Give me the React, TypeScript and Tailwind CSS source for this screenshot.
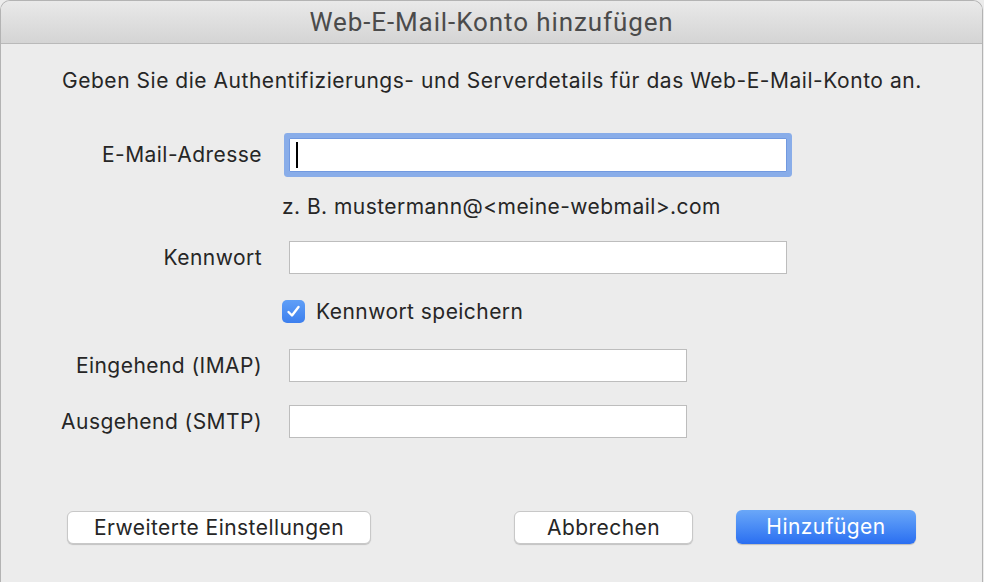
import React from 'react';

const font = { fontFamily: 'Inter, "Noto Sans", sans-serif' };

const Field = ({ width, focused }: { width: string; focused?: boolean }) => (
	<div
		className={
			focused
				? `${width} h-[34px] bg-white border border-[#7199e0] rounded-[1px] shadow-[0_0_0_5px_#89ade9] flex items-center pl-[6px]`
				: `${width} h-[33px] bg-white border border-[#bdbdbd]`
		}
	>
		{focused && <div className="w-[2px] h-[26px] bg-black" />}
	</div>
);

const Row = ({
	label,
	children,
	className,
}: {
	label: string;
	children: React.ReactNode;
	className: string;
}) => (
	<div className={`flex items-center ${className}`}>
		<div className="w-[262px] text-right text-[21px] tracking-[0.45px] text-[#262626] pr-[1px]">
			{label}
		</div>
		<div className="ml-[26px]">{children}</div>
	</div>
);

export default function App() {
	return (
		<div
			className="w-[984px] h-[582px] bg-[#ececec] overflow-hidden"
			style={font}
		>
			<div className="w-[983px] h-[600px] bg-[#ececec] border-x border-t border-[#b3b3b3] rounded-t-[10px] flex flex-col overflow-hidden">
				<div className="h-[43px] shrink-0 bg-gradient-to-b from-[#e9e9e9] to-[#d4d4d4] border-b border-[#b9b9b9] flex items-center justify-center">
					<span
						className="text-[26px] tracking-[0.9px] text-[#4b4b4b]"
						style={{ fontFamily: 'Roboto, sans-serif' }}
					>
						Web-E-Mail-Konto hinzufügen
					</span>
				</div>

				<p className="mt-[25px] h-[24px] leading-[24px] pl-[61px] text-[21px] tracking-[0.53px] text-[#262626] whitespace-nowrap">
					Geben Sie die Authentifizierungs- und Serverdetails für das
					Web-E-Mail-Konto an.
				</p>

				<Row label="E-Mail-Adresse" className="mt-[45px] h-[34px]">
					<Field width="w-[498px]" focused />
				</Row>

				<div className="mt-[23px] h-[24px] leading-[24px] pl-[281px] text-[21px] tracking-[0.45px] text-[#262626]">
					z. B. mustermann@&lt;meine-webmail&gt;.com
				</div>

				<Row label="Kennwort" className="mt-[22px] h-[33px]">
					<Field width="w-[498px]" />
				</Row>

				<div className="mt-[26px] h-[23px] flex items-center pl-[281px]">
					<div className="w-[23px] h-[23px] rounded-[5px] bg-gradient-to-b from-[#5f9ff7] to-[#3d7fee] flex items-center justify-center">
						<svg width="15" height="15" viewBox="0 0 15 15" fill="none">
							<path
								d="M2.5 8 L6 11.5 L12.5 3"
								stroke="white"
								strokeWidth="2.4"
								strokeLinecap="round"
								strokeLinejoin="round"
							/>
						</svg>
					</div>
					<span className="ml-[11px] text-[21px] tracking-[0.45px] text-[#262626]">
						Kennwort speichern
					</span>
				</div>

				<Row label="Eingehend (IMAP)" className="mt-[26px] h-[33px]">
					<Field width="w-[398px]" />
				</Row>

				<Row label="Ausgehend (SMTP)" className="mt-[23px] h-[33px]">
					<Field width="w-[398px]" />
				</Row>

				<div className="mt-[72px] flex items-center pl-[66px] pr-[66px]">
					<button className="w-[304px] h-[33px] bg-white rounded-[6px] border border-[#c8c8c8] shadow-[0_1px_1px_rgba(0,0,0,0.18)] text-[21px] tracking-[0.45px] text-[#262626]">
						Erweiterte Einstellungen
					</button>
					<div className="flex-1" />
					<button className="w-[179px] h-[33px] bg-white rounded-[6px] border border-[#c8c8c8] shadow-[0_1px_1px_rgba(0,0,0,0.18)] text-[21px] tracking-[0.45px] text-[#262626]">
						Abbrechen
					</button>
					<button className="ml-[43px] w-[180px] h-[34px] rounded-[6px] bg-gradient-to-b from-[#6aa7f8] to-[#2a6ef1] shadow-[0_1px_1px_rgba(0,0,0,0.2)] text-[21px] tracking-[0.45px] text-white">
						Hinzufügen
					</button>
				</div>
			</div>
		</div>
	);
}
